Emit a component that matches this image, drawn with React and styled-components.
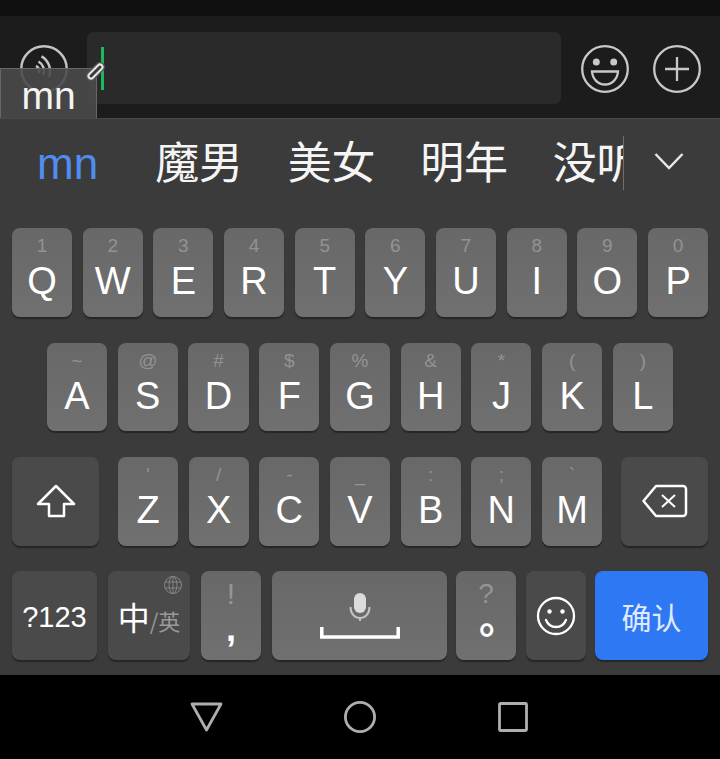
import React from 'react';
import styled, { createGlobalStyle } from 'styled-components';

const GlobalStyle = createGlobalStyle`
	html, body {
		margin: 0;
		padding: 0;
		background: #000;
	}
	* {
		box-sizing: border-box;
	}
`;

const latin = `"Liberation Sans", "Noto Sans CJK SC", sans-serif`;
const cjk = `"Noto Sans CJK SC", "Liberation Sans", sans-serif`;

const Screen = styled.div`
	position: relative;
	width: 720px;
	height: 759px;
	overflow: hidden;
	display: flex;
	flex-direction: column;
	background: #000;
	font-family: ${latin};
`;

const TopStrip = styled.div`
	height: 16px;
	background: #0f0f0f;
`;

const InputBar = styled.div`
	height: 102px;
	padding: 16px 19px 14px 20px;
	display: flex;
	align-items: center;
	background: #1c1c1c;

	svg {
		margin-top: 2px;
	}
`;

const Field = styled.div`
	flex: 1;
	height: 72px;
	margin: 0 20px 0 19px;
	padding-left: 14px;
	display: flex;
	align-items: center;
	border-radius: 6px;
	background: #2a2a2a;
`;

const Caret = styled.div`
	width: 3px;
	height: 43px;
	background: #1cb85c;
`;

const BarIcons = styled.div`
	display: flex;
	gap: 24px;
`;

const Composing = styled.div`
	position: absolute;
	left: 0;
	top: 68px;
	width: 97px;
	height: 50px;
	padding-top: 4px;
	text-align: center;
	font-size: 39px;
	line-height: 46px;
	color: #f4f4f4;
	background: rgba(74, 74, 74, 0.9);
	border: 1px solid #666;
	border-bottom: 0;
`;

const Pencil = styled.svg`
	position: absolute;
	left: 86px;
	top: 62px;
`;

const Panel = styled.div`
	height: 557px;
	display: flex;
	flex-direction: column;
	background: #3b3b3b;
	border-top: 1px solid #4a4a4a;
`;

const CandidateBar = styled.div`
	height: 87px;
	display: flex;
	align-items: center;
`;

const CandidateList = styled.div`
	width: 624px;
	height: 54px;
	padding-left: 37px;
	display: flex;
	align-items: center;
	gap: 44.5px;
	overflow: hidden;
	white-space: nowrap;
	border-right: 1px solid #6e6e6e;
`;

const Candidate = styled.span`
	flex: none;
	margin-top: ${({ $active }) => ($active ? '3px' : '-5px')};
	margin-right: ${({ $active }) => ($active ? '12.5px' : '0')};
	font-family: ${({ $active }) => ($active ? latin : cjk)};
	font-size: 44px;
	line-height: 54px;
	color: ${({ $active }) => ($active ? '#4f8ef0' : '#f5f5f5')};
`;

const MoreButton = styled.div`
	flex: 1;
	padding-right: 7px;
	display: flex;
	justify-content: center;
	margin-top: -4px;
`;

const Keyboard = styled.div`
	padding: 22.4px 12px 0;
	display: flex;
	flex-direction: column;
	gap: 25.6px;
`;

const Row = styled.div`
	height: 88.7px;
	padding: 0 ${({ $inset }) => $inset || 0}px;
	display: flex;
	justify-content: ${({ $spread }) => ($spread ? 'space-between' : 'flex-start')};
	gap: ${({ $gap }) => ($gap === undefined ? 10.67 : $gap)}px;
`;

const KeyGroup = styled.div`
	display: flex;
	gap: ${({ $gap }) => $gap}px;
`;

const keyColors = {
	light: 'linear-gradient(#686868, #707070)',
	dark: '#4a4a4a',
	blue: '#2f78f3',
};

const Key = styled.div`
	flex: ${({ $width }) => ($width ? 'none' : '1')};
	width: ${({ $width }) => ($width ? `${$width}px` : 'auto')};
	display: flex;
	flex-direction: column;
	align-items: center;
	justify-content: ${({ $center }) => ($center ? 'center' : 'flex-start')};
	border-radius: 8px;
	background: ${({ $tone }) => keyColors[$tone || 'light']};
	box-shadow: 0 2px 1px #262626;
	color: #fff;
`;

const Hint = styled.span`
	height: 27px;
	padding-top: 9px;
	font-size: 19px;
	line-height: 18px;
	color: #939393;
`;

const Letter = styled.span`
	height: 52px;
	font-size: 38px;
	line-height: 52px;
`;

const SymbolKey = styled(Key)`
	position: relative;
`;

const TallHint = styled.span`
	height: 38px;
	padding-top: 8px;
	font-size: ${({ $size }) => $size}px;
	line-height: 30px;
	color: #959595;
`;

const Punctuation = styled.span`
	margin-top: 3px;
	font-size: 36px;
	line-height: 34px;
	font-weight: 700;
`;

const RoundStop = styled.span`
	font-family: ${cjk};
	font-size: 40px;
	font-weight: 700;
	line-height: 14px;
	padding-left: 26px;
`;

const SwitchText = styled.span`
	margin-top: 3px;
	font-size: 29px;
`;

const LangLabel = styled.div`
	margin-top: 5px;
	display: flex;
	align-items: baseline;
	font-family: ${cjk};
	font-size: 32px;
	line-height: 44px;
`;

const LangMuted = styled.span`
	font-size: 22px;
	color: #9a9a9a;
`;

const Globe = styled.svg`
	position: absolute;
	right: 8px;
	top: 5px;
`;

const ConfirmText = styled.span`
	font-family: ${cjk};
	font-size: 30px;
	color: #dfeaff;
`;

const NavBar = styled.div`
	height: 84px;
	display: grid;
	grid-template-columns: repeat(3, 153.25px);
	justify-content: center;
	justify-items: center;
	align-items: center;
	background: #000;
`;

const rowOne = [
	['1', 'Q'], ['2', 'W'], ['3', 'E'], ['4', 'R'], ['5', 'T'],
	['6', 'Y'], ['7', 'U'], ['8', 'I'], ['9', 'O'], ['0', 'P'],
];
const rowTwo = [
	['~', 'A'], ['@', 'S'], ['#', 'D'], ['$', 'F'], ['%', 'G'],
	['&', 'H'], ['*', 'J'], ['(', 'K'], [')', 'L'],
];
const rowThree = [
	["'", 'Z'], ['/', 'X'], ['-', 'C'], ['_', 'V'], [':', 'B'], [';', 'N'], ['`', 'M'],
];

const LetterKey = ({ hint, letter, width }) => (
	<Key $width={width}>
		<Hint>{hint}</Hint>
		<Letter>{letter}</Letter>
	</Key>
);

const App = () => (
	<>
		<GlobalStyle />
		<Screen>
			<TopStrip />
			<InputBar>
				<svg width="48" height="48" viewBox="0 0 48 48" fill="none" stroke="#c4c4c4" strokeWidth="2.5">
					<circle cx="24" cy="24" r="22.7" />
					<path d="M16 20.800A6 6 0 0 1 18.600 28" />
					<path d="M18.500 16.500A11 11 0 0 1 23.300 29.800" />
					<path d="M21.500 11.300A17 17 0 0 1 29 31.800" />
				</svg>
				<Field>
					<Caret />
				</Field>
				<BarIcons>
					<svg width="48" height="48" viewBox="0 0 48 48" fill="none" stroke="#c8c8c8" strokeWidth="2.3">
						<circle cx="24" cy="24" r="22.8" />
						<circle cx="15.300" cy="17" r="3.500" fill="#c8c8c8" stroke="none" />
						<circle cx="32.700" cy="17" r="3.500" fill="#c8c8c8" stroke="none" />
						<path d="M11 26.500h26c-.5 7.500-6 13-13 13s-12.500-5.500-13-13z" />
					</svg>
					<svg width="48" height="48" viewBox="0 0 48 48" fill="none" stroke="#c8c8c8" strokeWidth="2.3">
						<circle cx="24" cy="24" r="22.8" />
						<path d="M12 24h24M24 12v24" />
					</svg>
				</BarIcons>
			</InputBar>
			<Panel>
				<CandidateBar>
					<CandidateList>
						<Candidate $active>mn</Candidate>
						<Candidate>魔男</Candidate>
						<Candidate>美女</Candidate>
						<Candidate>明年</Candidate>
						<Candidate>没听</Candidate>
					</CandidateList>
					<MoreButton>
						<svg width="30" height="18" viewBox="0 0 30 18" fill="none" stroke="#e8e8e8" strokeWidth="2.500">
							<path d="M1.500 2L15 16 28.500 2" />
						</svg>
					</MoreButton>
				</CandidateBar>
				<Keyboard>
					<Row>
						{rowOne.map(([hint, letter]) => (
							<LetterKey key={letter} hint={hint} letter={letter} />
						))}
					</Row>
					<Row $inset={35}>
						{rowTwo.map(([hint, letter]) => (
							<LetterKey key={letter} hint={hint} letter={letter} />
						))}
					</Row>
					<Row $spread $gap={0}>
						<Key $tone="dark" $width={87} $center>
							<svg width="40" height="34" viewBox="0 0 40 34" fill="none" stroke="#fff" strokeWidth="2.500" strokeLinejoin="round">
								<path d="M20 2L38 20H28V32H13V20H2z" />
							</svg>
						</Key>
						<KeyGroup $gap={10.67}>
							{rowThree.map(([hint, letter]) => (
								<LetterKey key={letter} hint={hint} letter={letter} width={60} />
							))}
						</KeyGroup>
						<Key $tone="dark" $width={87} $center>
							<svg width="46" height="34" viewBox="0 0 46 34" fill="none" stroke="#fff" strokeWidth="2.500" strokeLinejoin="round">
								<path d="M14 2h27a3 3 0 0 1 3 3v24a3 3 0 0 1-3 3H14L1.500 17z" />
								<path d="M20 11l13 12M33 11L20 23" strokeWidth="2" />
							</svg>
						</Key>
					</Row>
					<Row $spread $gap={0}>
						<KeyGroup $gap={11}>
							<Key $tone="dark" $width={85} $center>
								<SwitchText>?123</SwitchText>
							</Key>
							<SymbolKey $tone="dark" $width={82} $center>
								<Globe width="18" height="18" viewBox="0 0 18 18" fill="none" stroke="#858585" strokeWidth="1">
									<circle cx="9" cy="9" r="8.500" />
									<ellipse cx="9" cy="9" rx="4" ry="8.500" />
									<path d="M9 .5v17M1 6h16M1 12h16" />
								</Globe>
								<LangLabel>
									中<LangMuted>/英</LangMuted>
								</LangLabel>
							</SymbolKey>
							<Key $width={60}>
								<TallHint $size={30}>!</TallHint>
								<Punctuation>,</Punctuation>
							</Key>
							<Key $width={175} $center>
								<svg width="80" height="46" viewBox="0 0 80 46">
									<rect x="34" y="0" width="12" height="20" rx="6" fill="#dcdcdc" />
									<path d="M30.500 14c0 7 4.500 11 9.500 11s9.500-4 9.500-11" fill="none" stroke="#c4c4c4" strokeWidth="2" />
									<path d="M40 25v3" stroke="#c4c4c4" strokeWidth="2" />
									<path d="M1.800 34v10h76.400v-10" fill="none" stroke="#fff" strokeWidth="3.500" />
								</svg>
							</Key>
						</KeyGroup>
						<KeyGroup $gap={9.500}>
							<Key $width={60}>
								<TallHint $size={28}>?</TallHint>
								<RoundStop>。</RoundStop>
							</Key>
							<Key $tone="dark" $width={60} $center>
								<svg width="40" height="40" viewBox="0 0 40 40" fill="none" stroke="#fff" strokeWidth="2.300">
									<circle cx="20" cy="20" r="18" />
									<circle cx="13.500" cy="15.500" r="2.200" fill="#fff" stroke="none" />
									<circle cx="26.500" cy="15.500" r="2.200" fill="#fff" stroke="none" />
									<path d="M10 24c2 5 6 7 10 7s8-2 10-7" strokeLinecap="round" />
								</svg>
							</Key>
							<Key $tone="blue" $width={113} $center>
								<ConfirmText>确认</ConfirmText>
							</Key>
						</KeyGroup>
					</Row>
				</Keyboard>
			</Panel>
			<NavBar>
				<svg width="33" height="30" viewBox="0 0 33 30" fill="none" stroke="#aeaeae" strokeWidth="2.800" strokeLinejoin="round">
					<path d="M2 2h29L16.500 28z" />
				</svg>
				<svg width="34" height="34" viewBox="0 0 34 34" fill="none" stroke="#aeaeae" strokeWidth="2.800">
					<circle cx="17" cy="17" r="14.600" />
				</svg>
				<svg width="30" height="30" viewBox="0 0 30 30" fill="none" stroke="#aeaeae" strokeWidth="2.800" strokeLinejoin="round">
					<rect x="1.500" y="1.500" width="27" height="27" rx="1" />
				</svg>
			</NavBar>
			<Composing>mn</Composing>
			<Pencil width="20" height="20" viewBox="0 0 20 20" fill="none" strokeLinecap="round">
				<path d="M5 14l9-9" stroke="#555" strokeWidth="10" />
				<path d="M5 14l9-9" stroke="#e6e6e6" strokeWidth="7" />
				<path d="M5 14l9-9" stroke="#3a3a3a" strokeWidth="3" />
			</Pencil>
		</Screen>
	</>
);

export default App;
